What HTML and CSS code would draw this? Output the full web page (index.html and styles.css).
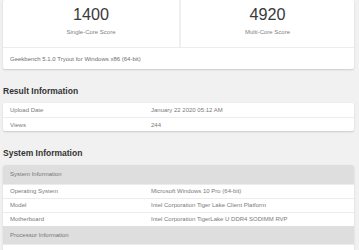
FILE: index.html
```html
<!DOCTYPE html>
<html>
<head>
<meta charset="utf-8">
<link rel="stylesheet" href="styles.css">
</head>
<body>
<div class="page">
  <div class="card score-card">
    <div class="scores">
      <div class="score">
        <div class="score-value">1400</div>
        <div class="score-label">Single-Core Score</div>
      </div>
      <div class="score">
        <div class="score-value">4920</div>
        <div class="score-label">Multi-Core Score</div>
      </div>
    </div>
    <div class="score-footer">Geekbench 5.1.0 Tryout for Windows x86 (64-bit)</div>
  </div>

  <h2 class="section-title">Result Information</h2>
  <div class="card table">
    <div class="row"><div class="cell label">Upload Date</div><div class="cell">January 22 2020 05:12 AM</div></div>
    <div class="row"><div class="cell label">Views</div><div class="cell">244</div></div>
  </div>

  <h2 class="section-title">System Information</h2>
  <div class="card table">
    <div class="row head"><div class="cell">System Information</div></div>
    <div class="row"><div class="cell label">Operating System</div><div class="cell">Microsoft Windows 10 Pro (64-bit)</div></div>
    <div class="row"><div class="cell label">Model</div><div class="cell">Intel Corporation Tiger Lake Client Platform</div></div>
    <div class="row"><div class="cell label">Motherboard</div><div class="cell">Intel Corporation TigerLake U DDR4 SODIMM RVP</div></div>
    <div class="row head"><div class="cell">Processor Information</div></div>
    <div class="row"><div class="cell label">Name</div><div class="cell">Intel 0000</div></div>
  </div>
</div>
</body>
</html>
```

FILE: styles.css
```css
html, body {
  margin: 0;
  padding: 0;
  background: #f1f1f1;
  font-family: "Liberation Sans", Arial, sans-serif;
  color: #666;
}
.page {
  padding: 0 5px 0 3px;
}
.card {
  background: #fff;
  border-radius: 2px;
  box-shadow: 0 1px 2px rgba(0, 0, 0, 0.16);
}
.scores {
  display: grid;
  grid-template-columns: 176px 1fr;
  height: 47px;
  border-bottom: 1px solid #ececec;
}
.score {
  display: flex;
  flex-direction: column;
  align-items: center;
  padding-top: 5px;
}
.score + .score {
  border-left: 2px solid #efefef;
}
.score-value {
  font-size: 16.2px;
  line-height: 18px;
  color: #3a3a3a;
}
.score-label {
  margin-top: 5px;
  font-size: 6px;
  line-height: 8px;
  color: #808080;
}
.score-footer {
  height: 21px;
  display: flex;
  align-items: center;
  padding-left: 7px;
  font-size: 6px;
  color: #6e6e6e;
}
.section-title {
  margin: 17px 0 7px 0;
  font-size: 8.5px;
  line-height: 10px;
  font-weight: bold;
  color: #333;
}
.row {
  display: grid;
  grid-template-columns: 141px 1fr;
  height: 14px;
  align-items: center;
  border-top: 1px solid #ececec;
  box-sizing: border-box;
  font-size: 6px;
  color: #7a7a7a;
}
.row:first-child {
  border-top: none;
}
.cell {
  padding-left: 7px;
  white-space: nowrap;
}
.row.head {
  grid-template-columns: 1fr;
  height: 18.5px;
  background: #dedede;
  border-top: none;
  color: #777;
}
.row.head:first-child {
  border-radius: 2px 2px 0 0;
}
```
